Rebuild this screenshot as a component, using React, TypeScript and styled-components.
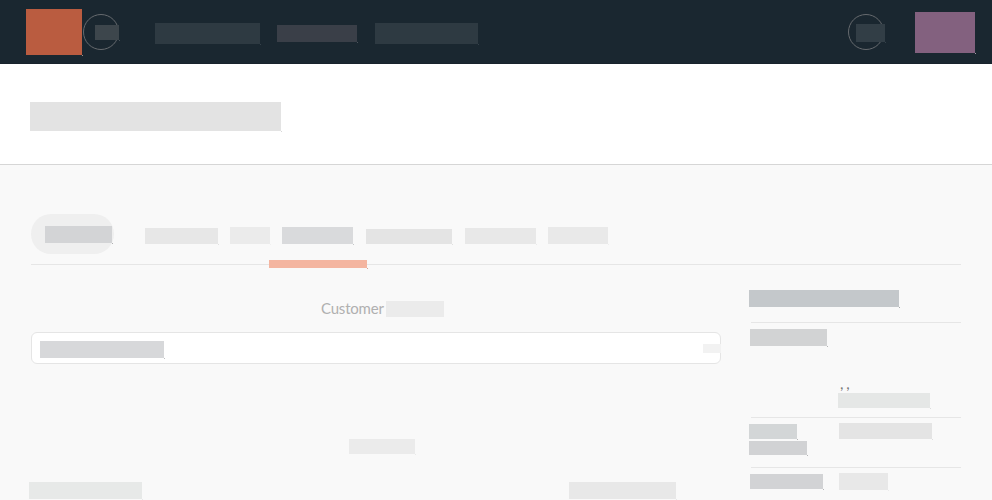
import React from "react";
import styled, { createGlobalStyle } from "styled-components";

const GlobalStyle = createGlobalStyle`
  *, *::before, *::after { box-sizing: border-box; }
  body { margin: 0; background: #f9f9f9; font-family: Lato, sans-serif; }
`;

const Page = styled.div`
  width: 992px;
  height: 500px;
  overflow: hidden;
  background: #f9f9f9;
`;

type SkeletonProps = {
  $w: number;
  $h: number;
  $color: string;
  $left?: number;
  $top?: number;
  $dot?: string;
};

/* Placeholder bar with a one-pixel tick beyond its lower right corner. */
const Skeleton = styled.div<SkeletonProps>`
  position: relative;
  flex: none;
  width: ${(p) => p.$w}px;
  height: ${(p) => p.$h}px;
  margin: ${(p) => p.$top ?? 0}px 0 0 ${(p) => p.$left ?? 0}px;
  background: ${(p) => p.$color};
  &::after {
    content: "";
    position: absolute;
    left: 100%;
    top: 100%;
    width: 1px;
    height: 1px;
    background: ${(p) => p.$dot ?? "transparent"};
  }
`;

const TopBar = styled.header`
  display: flex;
  align-items: flex-start;
  height: 64px;
  padding: 0 17px 0 26px;
  background: #1a2730;
  border-bottom: 1px solid #18232c;
`;

const RoundButton = styled.div<{ $left: number }>`
  flex: none;
  display: flex;
  align-items: flex-start;
  width: 36px;
  height: 36px;
  margin: 14px 0 0 ${(p) => p.$left}px;
  border: 1px solid #666a6e;
  border-radius: 50%;
`;

const MainNav = styled.nav`
  display: flex;
  align-items: flex-start;
  margin: 23px auto 0 36px;
`;

const TitleBand = styled.section`
  height: 101px;
  padding: 38px 30px 0;
  background: #fff;
  border-bottom: 1px solid #d6d6d6;
`;

const TabBar = styled.nav`
  display: flex;
  align-items: flex-start;
  height: 51px;
  margin: 49px 31px 0;
  border-bottom: 1px solid #e6e6e6;
`;

const Pill = styled.div`
  flex: none;
  width: 83px;
  height: 40px;
  padding: 12px 0 0 14px;
  border-radius: 20px;
  background: #efefef;
`;

const Tab = styled.div`
  position: relative;
  margin-left: 12px;
`;

const ActiveMark = styled.div`
  position: absolute;
  left: -13px;
  top: 46px;
`;

const Content = styled.main`
  display: grid;
  grid-template-columns: 692px 212px;
  column-gap: 28px;
  padding-left: 29px;
`;

const Heading = styled.div`
  display: flex;
  align-items: flex-start;
  height: 31px;
  margin: 36px 0 0 292px;
`;

const Label = styled.span`
  width: 65px;
  margin-top: -2px;
  font-size: 15px;
  line-height: 19px;
  letter-spacing: -0.2px;
  white-space: nowrap;
  color: #b0b0b0;
`;

const Field = styled.div`
  display: flex;
  align-items: flex-start;
  justify-content: space-between;
  width: 690px;
  height: 32px;
  margin-left: 2px;
  padding-left: 8px;
  border: 1px solid #e5e5e5;
  border-radius: 6px;
  background: #fff;
`;

const FieldEnd = styled.div`
  margin: 11px -1px 0 0;
`;

const Actions = styled.div`
  display: flex;
  gap: 427px;
  margin-top: 28px;
`;

const Side = styled.aside`
  padding-top: 25px;
`;

const SideTitle = styled.div`
  height: 32px;
`;

const Details = styled.section<{ $h: number }>`
  display: grid;
  grid-template-columns: 88px 122px;
  align-items: start;
  height: ${(p) => p.$h}px;
  margin-left: 2px;
  border-top: 1px solid #e6e6e6;
`;

const Address = styled.div`
  padding-top: 51px;
`;

const Commas = styled.div`
  height: 19px;
  padding-left: 1px;
  font-size: 15px;
  line-height: 18px;
  letter-spacing: -0.5px;
  color: #777;
`;

export default function App() {
  return (
    <Page>
      <GlobalStyle />
      <TopBar>
        <Skeleton $w={56} $h={46} $top={9} $color="#ba5c40" $dot="#9d8f8a" />
        <RoundButton $left={1}>
          <Skeleton $w={24} $h={15} $left={11} $top={10} $color="#3d464c" $dot="#48525a" />
        </RoundButton>
        <MainNav>
          <Skeleton $w={105} $h={21} $color="#2e3a42" $dot="#35414a" />
          <Skeleton $w={80} $h={17} $left={17} $top={2} $color="#3a3f48" $dot="#4c545c" />
          <Skeleton $w={103} $h={21} $left={18} $color="#2e3a42" $dot="#35414a" />
        </MainNav>
        <RoundButton $left={0}>
          <Skeleton $w={29} $h={18} $left={7} $top={9} $color="#323e46" $dot="#35414a" />
        </RoundButton>
        <Skeleton $w={60} $h={41} $left={31} $top={12} $color="#83617f" $dot="#a69aa6" />
      </TopBar>

      <TitleBand>
        <Skeleton $w={251} $h={29} $color="#e3e3e3" $dot="#d8d8d8" />
      </TitleBand>

      <TabBar>
        <Pill>
          <Skeleton $w={67} $h={17} $color="#d3d4d6" $dot="#b0b1b3" />
        </Pill>
        <Skeleton $w={73} $h={16} $left={31} $top={14} $color="#e7e7e7" $dot="#e0e0e0" />
        <Skeleton $w={40} $h={17} $left={12} $top={13} $color="#ebebeb" $dot="#f0f0f0" />
        <Tab>
          <Skeleton $w={71} $h={17} $top={13} $color="#d9dadc" $dot="#c6c7c9" />
          <ActiveMark>
            <Skeleton $w={98} $h={8} $color="#f4b5a0" $dot="#d6a292" />
          </ActiveMark>
        </Tab>
        <Skeleton $w={86} $h={15} $left={13} $top={15} $color="#e4e4e4" $dot="#e0e0e0" />
        <Skeleton $w={71} $h={16} $left={13} $top={14} $color="#e8e8e8" $dot="#ebebeb" />
        <Skeleton $w={60} $h={17} $left={12} $top={13} $color="#e9e9e9" $dot="#eeeeee" />
      </TabBar>

      <Content>
        <div>
          <Heading>
            <Label>Customer</Label>
            <Skeleton $w={58} $h={16} $color="#ebebeb" />
          </Heading>
          <Field>
            <Skeleton $w={124} $h={17} $top={8} $color="#d7d8da" $dot="#bebfc1" />
            <FieldEnd>
              <Skeleton $w={18} $h={9} $color="#f2f2f2" />
            </FieldEnd>
          </Field>
          <Skeleton $w={66} $h={15} $left={320} $top={75} $color="#ebebeb" $dot="#eaeaea" />
          <Actions>
            <Skeleton $w={113} $h={17} $color="#e7e9e8" $dot="#e8e8e8" />
            <Skeleton $w={107} $h={17} $color="#e8e8e8" $dot="#e8e8e8" />
          </Actions>
        </div>

        <Side>
          <SideTitle>
            <Skeleton $w={150} $h={17} $color="#c4c8cb" $dot="#a8abad" />
          </SideTitle>
          <Details $h={95}>
            <Skeleton $w={77} $h={17} $left={-1} $top={6} $color="#d2d3d4" $dot="#b5b6b7" />
            <Address>
              <Commas>, ,</Commas>
              <Skeleton $w={92} $h={15} $left={-1} $color="#e5e7e6" $dot="#dedede" />
            </Address>
          </Details>
          <Details $h={50}>
            <div>
              <Skeleton $w={48} $h={15} $left={-2} $top={6} $color="#d3d6d7" $dot="#b5b6b7" />
              <Skeleton $w={58} $h={14} $left={-2} $top={2} $color="#d1d2d4" $dot="#b5b6b7" />
            </div>
            <Skeleton $w={93} $h={16} $top={5} $color="#e4e4e4" $dot="#dedede" />
          </Details>
          <Details $h={33}>
            <Skeleton $w={73} $h={15} $left={-1} $top={6} $color="#d2d3d5" $dot="#b5b6b7" />
            <Skeleton $w={49} $h={17} $top={5} $color="#e8e8e8" $dot="#ebebeb" />
          </Details>
        </Side>
      </Content>
    </Page>
  );
}
